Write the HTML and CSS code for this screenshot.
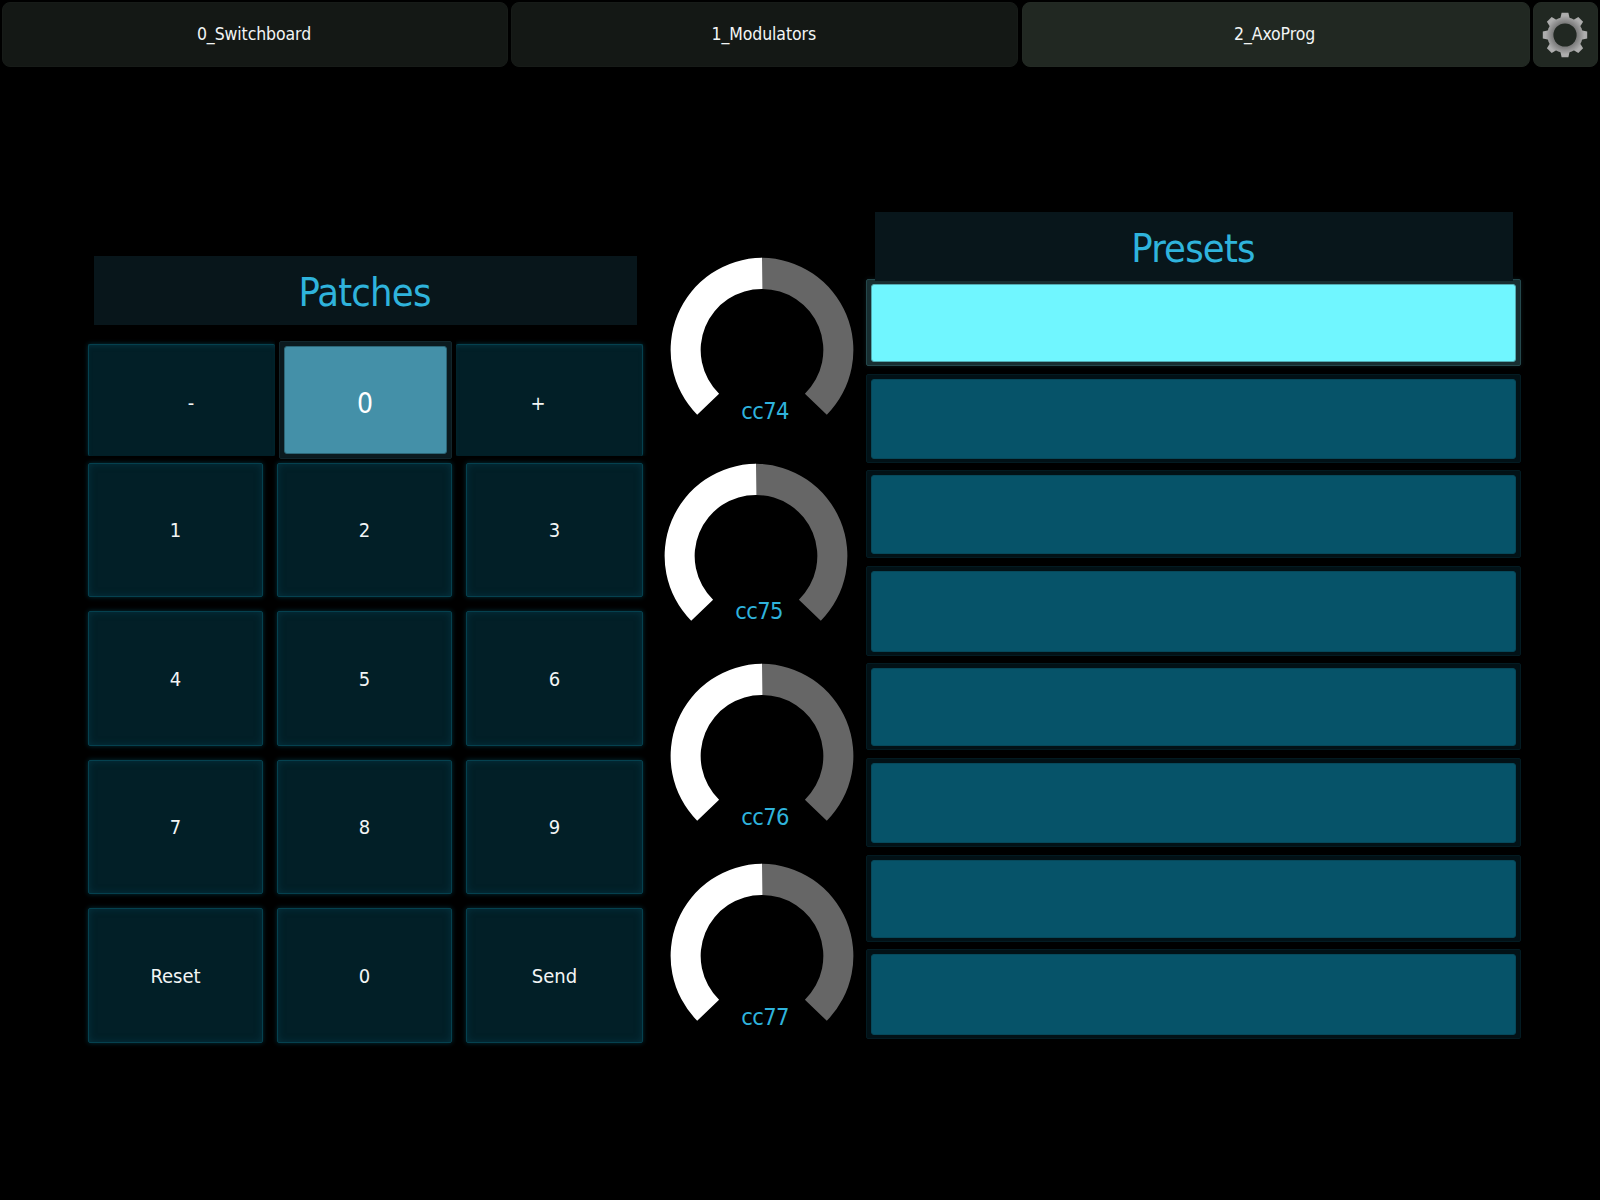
FILE: index.html
```html
<!DOCTYPE html>
<html lang="en">
<head>
<meta charset="utf-8">
<title>AxoProg</title>
<link rel="stylesheet" href="styles.css">
</head>
<body>
<svg class="defs" width="0" height="0" aria-hidden="true">
  <symbol id="dial" viewBox="-93 -93 186 186">
    <path fill="#666" d="M-1-92.3H0A92.3 92.3 0 0 1 64.8 64.8L42.9 43.7A61 61 0 0 0 0-61H-1Z"/>
    <path fill="#fff" d="M-64.8 64.8A92.3 92.3 0 0 1 0-92.3L.4-61A61 61 0 0 0-42.9 43.7Z"/>
  </symbol>
</svg>
<nav class="tabs">
  <div class="tab">0_Switchboard</div>
  <div class="tab">1_Modulators</div>
  <div class="tab active">2_AxoProg</div>
  <div class="tab active gear">
    <svg width="46" height="46" viewBox="-23 -23 46 46">
      <defs>
        <radialGradient id="metal" gradientUnits="userSpaceOnUse" cx="0" cy="0" r="22">
          <stop offset=".5" stop-color="#747474"/>
          <stop offset=".68" stop-color="#8f8f8f"/>
          <stop offset=".88" stop-color="#adadad"/>
        </radialGradient>
        <path id="tooth" d="M-5-15L-3.4-22.2H3.4L5-15Z"/>
      </defs>
      <g fill="url(#metal)">
        <use href="#tooth"/><use href="#tooth" transform="rotate(45)"/>
        <use href="#tooth" transform="rotate(90)"/><use href="#tooth" transform="rotate(135)"/>
        <use href="#tooth" transform="rotate(180)"/><use href="#tooth" transform="rotate(225)"/>
        <use href="#tooth" transform="rotate(270)"/><use href="#tooth" transform="rotate(315)"/>
        <circle r="17.8"/>
      </g>
      <circle r="11.6" fill="#212822"/>
    </svg>
  </div>
</nav>
<main class="board">
  <section class="patches">
    <h2 class="title">Patches</h2>
    <div class="stepper">
      <div class="key minus">-</div>
      <div class="display"><span class="value">0</span></div>
      <div class="key plus">+</div>
    </div>
    <div class="keypad">
      <div class="key">1</div><div class="key">2</div><div class="key">3</div>
      <div class="key">4</div><div class="key">5</div><div class="key">6</div>
      <div class="key">7</div><div class="key">8</div><div class="key">9</div>
      <div class="key">Reset</div><div class="key">0</div><div class="key">Send</div>
    </div>
  </section>
  <section class="knobs">
    <div class="knob first"><svg class="dial"><use href="#dial"/></svg><span class="cc">cc74</span></div>
    <div class="knob second"><svg class="dial"><use href="#dial"/></svg><span class="cc">cc75</span></div>
    <div class="knob"><svg class="dial"><use href="#dial"/></svg><span class="cc">cc76</span></div>
    <div class="knob"><svg class="dial"><use href="#dial"/></svg><span class="cc">cc77</span></div>
  </section>
  <section class="presets">
    <h2 class="title">Presets</h2>
    <div class="slots">
      <div class="slot on"></div><div class="slot"></div><div class="slot"></div><div class="slot"></div>
      <div class="slot"></div><div class="slot"></div><div class="slot"></div><div class="slot"></div>
    </div>
  </section>
</main>
</body>
</html>
```
FILE: styles.css
```css
* { box-sizing: border-box; }
body {
  margin: 0;
  width: 1600px;
  height: 1200px;
  overflow: hidden;
  background: #000;
  color: #f2f5f5;
  font-family: "DejaVu Sans Condensed", "DejaVu Sans", sans-serif;
  font-stretch: condensed;
}
.defs { display: block; }

.tabs {
  display: grid;
  grid-template-columns: 506px 507px 508px 65px;
  column-gap: 3.3px;
  height: 67px;
  padding: 2px 2px 0;
}
.tab {
  display: flex;
  align-items: center;
  justify-content: center;
  padding: 0 2px 1px 0;
  border: 1px solid #171b18;
  border-radius: 8px;
  background: #141815;
  font-size: 17.5px;
  letter-spacing: -.1px;
}
.tab.active { background: #212822; border-color: #232a24; }
.tab.gear { padding: 0; }

.board {
  display: grid;
  grid-template-columns: 555px 208px 655px;
  column-gap: 7.5px;
  padding-left: 88px;
}

.title {
  display: flex;
  align-items: center;
  justify-content: center;
  height: 69px;
  margin: 0;
  padding: 2px 2px 0 0;
  background: #08161b;
  color: #2fb3dc;
  font-size: 39.5px;
  font-weight: 400;
  letter-spacing: -.8px;
}

.patches { padding-top: 189px; }
.patches .title { margin: 0 6px 0 6px; }
.stepper {
  display: grid;
  grid-template-columns: 187px 173px 187px;
  column-gap: 4px;
  align-items: center;
  margin-top: 16px;
  height: 118px;
}
.key {
  display: flex;
  align-items: center;
  justify-content: center;
  border: 1px solid #05414f;
  border-radius: 2px;
  background: #021f27;
  box-shadow: 0 0 5px #03303c, inset 0 0 7px #04323f;
  font-size: 20px;
}
.stepper .key {
  height: 112px;
  padding-top: 5px;
  border-bottom: 0;
  box-shadow: 0 0 5px #03303c, inset 0 3px 5px -2px #04323f;
}
.stepper .minus { padding-left: 18px; border-right: 0; clip-path: inset(-6px 0 0 -6px); }
.stepper .plus { padding-right: 22px; border-left: 0; clip-path: inset(-6px -6px 0 0); }
.display {
  height: 118px;
  padding: 4px;
  border: 1px solid #12262c;
  border-radius: 2px;
  background: #0b1a1f;
}
.value {
  display: flex;
  align-items: center;
  justify-content: center;
  height: 108px;
  padding: 6px 1px 0 0;
  border: 1px solid #2c6677;
  border-radius: 3px;
  background: #4490a8;
  color: #fff;
  font-size: 28px;
}
.keypad {
  display: grid;
  grid-template-columns: 175px 175px 177px;
  grid-template-rows: repeat(4, 134.3px);
  gap: 14.2px 14px;
  margin-top: 4px;
}

.knobs { padding-top: 190px; }
.knob {
  display: flex;
  flex-direction: column;
  align-items: center;
  height: 200px;
  padding-left: 15px;
}
.first { height: 206px; }
.second { padding-left: 3px; }
.dial { flex: none; width: 186px; height: 186px; }
.cc {
  margin: -46px 0 0 6px;
  color: #2fb3dc;
  font-size: 23.5px;
  line-height: 28px;
  letter-spacing: -.7px;
}
.second .cc { margin-top: -52px; }

.presets { padding-top: 145px; }
.presets .title { position: relative; margin: 0 8px 0 9px; }
.slots {
  display: grid;
  grid-template-rows: 87px 89px 88px 90px 87px 89px 87px 90px;
  row-gap: 7.6px;
  margin-top: -2px;
}
.slot {
  padding: 4px 4px 5px;
  border: 1px solid #031b22;
  border-radius: 2px;
  background: #021116;
}
.slot::before {
  content: "";
  display: block;
  height: 100%;
  border: 1px solid #06485a;
  border-radius: 3px;
  background: #065369;
}
.slot.on { border-color: #24484c; background: #182e31; box-shadow: 0 0 5px #0a1618; }
.slot.on::before { background: #70f6ff; border-color: #52aab1; }
```
